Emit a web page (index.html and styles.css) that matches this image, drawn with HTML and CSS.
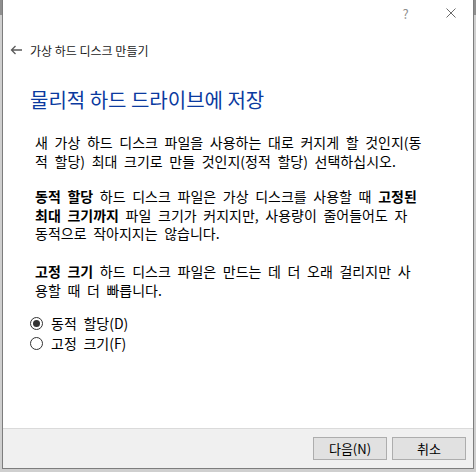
FILE: index.html
```html
<!DOCTYPE html>
<html>
<head>
    <title>가상 하드 디스크 만들기</title>
    <link rel="stylesheet" href="styles.css">
</head>

<body>
    <div class="window">
        <div class="titlebar">
            <div class="capbtn help">?</div>
            <div class="capbtn close">
                <svg width="10" height="10" viewBox="0 0 10 10"><path d="M0.5 0.5L9.5 9.5M9.5 0.5L0.5 9.5" stroke="#6b6b6b" stroke-width="1" fill="none"/></svg>
            </div>
        </div>

        <div class="nav">
            <svg class="back" width="12" height="10" viewBox="0 0 12 10"><path d="M12 5H1.5M5.5 1L1.5 5L5.5 9" stroke="#5a5a5a" stroke-width="1.3" fill="none"/></svg>
            <span>가상 하드 디스크 만들기</span>
        </div>

        <div class="content">
            <h1 class="heading">물리적 하드 드라이브에 저장</h1>

            <p class="para">새 가상 하드 디스크 파일을 사용하는 대로 커지게 할 것인지(동<br>적 할당) 최대 크기로 만들 것인지(정적 할당) 선택하십시오.</p>

            <p class="para"><b>동적 할당</b> 하드 디스크 파일은 가상 디스크를 사용할 때 <b>고정된<br>최대 크기까지</b> 파일 크기가 커지지만, 사용량이 줄어들어도 자<br>동적으로 작아지지는 않습니다.</p>

            <p class="para para3"><b>고정 크기</b> 하드 디스크 파일은 만드는 데 더 오래 걸리지만 사<br>용할 때 더 빠릅니다.</p>

            <div class="options">
                <div class="option"><span class="radio checked"></span>동적 할당(D)</div>
                <div class="option"><span class="radio"></span>고정 크기(F)</div>
            </div>
        </div>

        <div class="footer">
            <div class="btn default">다음(N)</div>
            <div class="btn">취소</div>
        </div>
    </div>
</body>
</html>
```

FILE: styles.css
```css
html,body {margin: 0; padding: 0;}

body
{
    width: 476px;
    height: 472px;
    background: linear-gradient(#8f8f8f 0, #8f8f8f 15px, #cfcfcf 15px);
    font-family: "Noto Sans CJK KR", "Noto Sans", sans-serif;
    overflow: hidden;
}

.window
{
    width: 470px;
    height: 468px;
    margin-left: 2px;
    background: white;
    border: 1px solid #7d7d7d;
    border-top: none;
    display: flex;
    flex-direction: column;
}

.titlebar
{
    height: 26px;
    display: flex;
    justify-content: flex-end;
}

.capbtn
{
    width: 45px;
    height: 26px;
    display: flex;
    align-items: center;
    justify-content: center;
}

.help
{
    font-size: 13px;
    color: #8e8e8e;
}

.nav
{
    margin-top: 14px;
    padding-left: 7px;
    height: 20px;
    display: flex;
    align-items: center;
    gap: 8px;
    font-size: 12px;
    color: #1a1a1a;
}

.content
{
    flex: 1;
    padding-left: 27px;
}

.heading
{
    margin: 26px 0 0 0;
    font-size: 20px;
    line-height: 28px;
    font-weight: normal;
    color: #0b3a9f;
}

.para
{
    margin: 19px 0 0 5px;
    font-size: 14px;
    line-height: 18.5px;
    word-spacing: 3.5px;
    white-space: nowrap;
    color: #000;
}

.para + .para {margin-top: 17px;}
.para.para3 {margin-top: 19.5px;}

b {font-weight: bold;}

.options {margin-top: 14px;}

.option
{
    height: 20px;
    line-height: 20px;
    display: flex;
    align-items: center;
    gap: 8px;
    font-size: 14px;
    word-spacing: 3.5px;
}

.radio
{
    width: 11px;
    height: 11px;
    border: 1px solid #333;
    border-radius: 50%;
    display: flex;
    align-items: center;
    justify-content: center;
}

.radio.checked::after
{
    content: "";
    width: 7px;
    height: 7px;
    border-radius: 50%;
    background: #333;
}

.footer
{
    height: 39px;
    background: #f0f0f0;
    border-top: 1px solid #dadada;
    display: flex;
    justify-content: flex-end;
    align-items: center;
    gap: 5px;
    padding-right: 7px;
}

.btn
{
    width: 72px;
    height: 21px;
    line-height: 21px;
    background: #e1e1e1;
    border: 1px solid #adadad;
    font-size: 13px;
    display: flex;
    align-items: center;
    justify-content: center;
    color: #000;
}
```
